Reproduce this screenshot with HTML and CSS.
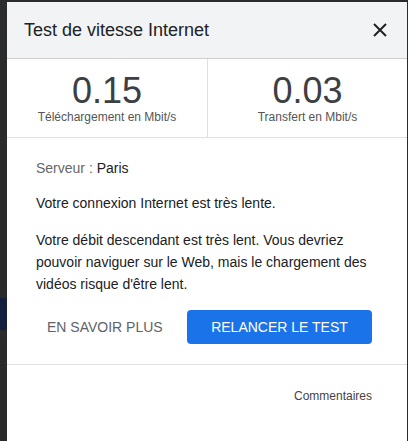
FILE: index.html
```html
<!DOCTYPE html>
<html lang="fr">
<head>
  <meta charset="UTF-8" />
  <title>Test de vitesse Internet</title>
  <link rel="stylesheet" href="styles.css">
</head>
<body>
  <div class="dialog">
    <header class="dialog-header">
      <h1>Test de vitesse Internet</h1>
      <button class="close" aria-label="Fermer">
        <svg width="14" height="14" viewBox="0 0 14 14">
          <path d="M1 1 L13 13 M13 1 L1 13" stroke="#202124" stroke-width="2" fill="none" />
        </svg>
      </button>
    </header>

    <div class="stats">
      <div class="stat">
        <div class="value">0.15</div>
        <div class="unit">Téléchargement en Mbit/s</div>
      </div>
      <div class="stat">
        <div class="value">0.03</div>
        <div class="unit">Transfert en Mbit/s</div>
      </div>
    </div>

    <div class="content">
      <p class="server"><span class="muted">Serveur :</span> Paris</p>
      <p class="status">Votre connexion Internet est très lente.</p>
      <p>Votre débit descendant est très lent. Vous devriez pouvoir naviguer sur le Web, mais le chargement des vidéos risque d'être lent.</p>
      <div class="actions">
        <button class="text-button">EN SAVOIR PLUS</button>
        <button class="primary-button">RELANCER LE TEST</button>
      </div>
    </div>

    <footer class="dialog-footer">
      <a href="#">Commentaires</a>
    </footer>
  </div>
</body>
</html>
```

FILE: styles.css
```css
body {
  margin: 0;
  padding: 2px 0 0 7px;
  background: linear-gradient(#12203e, #12203e) no-repeat 0 298px / 7px 32px, #2b2b2b;
  font-family: 'Liberation Sans', Arial, sans-serif;
  overflow: hidden;
}

.dialog {
  background: white;
  width: 400px;
  height: 460px;
}

.dialog-header {
  background: #f1f3f4;
  height: 56px;
  border-bottom: 1px solid #cfcfcf;
  display: flex;
  align-items: center;
  justify-content: space-between;
  padding: 0 20px 0 17px;
}

.dialog-header h1 {
  margin: 0;
  font-size: 18px;
  font-weight: normal;
  color: #202124;
}

.close {
  background: none;
  border: none;
  padding: 0;
  width: 14px;
  height: 14px;
  display: flex;
  cursor: pointer;
}

.stats {
  display: grid;
  grid-template-columns: 200px 1fr;
  height: 78px;
  border-bottom: 1px solid #e0e0e0;
}

.stat {
  text-align: center;
  padding-top: 15px;
}

.stat + .stat {
  border-left: 1px solid #e0e0e0;
}

.value {
  font-size: 36px;
  line-height: 34px;
  color: #3c4043;
}

.unit {
  font-size: 12px;
  line-height: 14px;
  margin-top: 2px;
  color: #555;
}

.content {
  padding: 19px 35px 20px 29px;
  border-bottom: 1px solid #e0e0e0;
}

.content p {
  margin: 0 0 13px;
  font-size: 14px;
  line-height: 22px;
  color: #202124;
}

.content .status {
  margin-bottom: 15px;
}

.muted {
  color: #666;
}

.actions {
  display: flex;
  align-items: center;
  justify-content: space-between;
  margin-top: 15px;
  padding-left: 11px;
}

.text-button {
  background: none;
  border: none;
  padding: 0;
  font-family: inherit;
  font-size: 14px;
  color: #5f6368;
  cursor: pointer;
}

.primary-button {
  background: #1a73e8;
  color: white;
  border: none;
  border-radius: 4px;
  width: 185px;
  height: 34px;
  font-family: inherit;
  font-size: 14px;
  cursor: pointer;
}

.dialog-footer {
  text-align: right;
  padding: 21px 35px;
}

.dialog-footer a {
  font-size: 12px;
  color: #444;
  text-decoration: none;
}
```
